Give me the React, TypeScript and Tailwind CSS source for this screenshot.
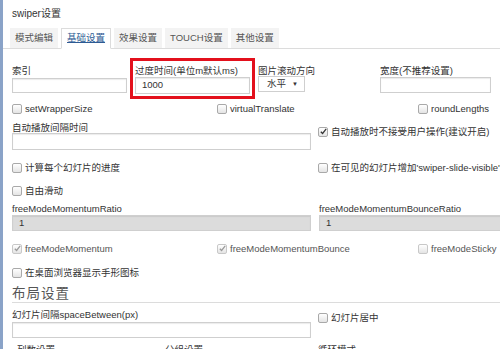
import React from "react";

const font = { fontFamily: '"Liberation Sans", "Noto Sans CJK SC", sans-serif' };

function Box({ checked = false, disabled = false }: { checked?: boolean; disabled?: boolean }) {
  return (
    <span
      className={`relative inline-block w-[10px] h-[10px] shrink-0 rounded-[2px] border ${
        disabled ? "border-[#c8c8c8]" : "border-[#a9a9a9]"
      } bg-gradient-to-b from-white to-[#e4e4e4]`}
    >
      {checked && (
        <svg viewBox="0 0 10 10" className="absolute left-[0px] top-[-1px] w-[9px] h-[9px]">
          <path
            d="M2 5.2 L4 7.2 L8 2.2"
            fill="none"
            stroke={disabled ? "#9a9a9a" : "#333"}
            strokeWidth="1.4"
          />
        </svg>
      )}
    </span>
  );
}

function Check({
  label,
  checked,
  disabled,
  className = "",
}: {
  label: string;
  checked?: boolean;
  disabled?: boolean;
  className?: string;
}) {
  return (
    <div className={`flex items-center gap-[3px] h-[12px] whitespace-nowrap ${className}`}>
      <Box checked={checked} disabled={disabled} />
      <span className={`text-[9.5px] leading-[12px] ${disabled ? "text-[#555]" : "text-[#333]"}`}>{label}</span>
    </div>
  );
}

function Input({ w, h = 16, value = "", disabled = false }: { w: number | string; h?: number; value?: string; disabled?: boolean }) {
  return (
    <div
      className={`border border-[#cfcfcf] shadow-[inset_0_1px_1px_rgba(0,0,0,0.08)] flex items-center pl-[6px] text-[9.5px] text-[#333] ${
        disabled ? "bg-[#dcdcdc]" : "bg-white"
      }`}
      style={{ width: w, height: h }}
    >
      {value}
    </div>
  );
}

export default function App() {
  return (
    <div
      className="w-[500px] h-[349px] overflow-hidden bg-white border-l-[3px] border-[#8aa3c8] text-[#333]"
      style={font}
    >
      <div className="w-[700px]">
        {/* title */}
        <div className="h-[26px] flex items-center pl-[9px] text-[10px] text-[#333]">swiper设置</div>

        {/* tabs */}
        <div className="mt-[3px] h-[20px] border-b border-[#dcdcdc] w-[497px] flex items-end pl-[7px] gap-[3px] text-[9.5px]">
          <div className="h-[20px] px-[5px] flex items-center bg-[#f3f3f3] text-[#555]">模式编辑</div>
          <div className="h-[21px] mb-[-1px] px-[5px] flex items-center bg-white border border-[#dcdcdc] border-b-white text-[#2d5b94] underline">
            基础设置
          </div>
          <div className="h-[20px] px-[5px] flex items-center bg-[#f3f3f3] text-[#555]">效果设置</div>
          <div className="h-[20px] px-[5px] flex items-center bg-[#f3f3f3] text-[#555]">TOUCH设置</div>
          <div className="h-[20px] px-[5px] flex items-center bg-[#f3f3f3] text-[#555]">其他设置</div>
        </div>

        <div className="pl-[9px] text-[9.5px]">
          {/* row 1 */}
          <div className="mt-[9px] flex items-start h-[41px]">
            <div className="w-[115px] mt-[7px]">
              <div className="h-[12px] leading-[12px]">索引</div>
              <div className="mt-[1px]">
                <Input w={115} h={15} />
              </div>
            </div>
            <div className="ml-[3px] w-[125px] h-[41px] border-[3px] border-[#e3101c] pl-[2px] pt-[4px]">
              <div className="h-[12px] leading-[12px] whitespace-nowrap">过度时间(单位m默认ms)</div>
              <Input w={115} h={17} value="1000" />
            </div>
            <div className="ml-[3px] w-[122px] mt-[7px]">
              <div className="h-[12px] leading-[12px] whitespace-nowrap">图片滚动方向</div>
              <div className="mt-[-1px] w-[47px] h-[16px] border border-[#cfcfcf] bg-white flex items-center pl-[8px] gap-[6px]">
                <span>水平</span>
                <span className="text-[6px]">▼</span>
              </div>
            </div>
            <div className="w-[111px] mt-[7px]">
              <div className="h-[12px] leading-[12px] whitespace-nowrap">宽度(不推荐设置)</div>
              <Input w={111} h={16} />
            </div>
          </div>

          {/* row 2 */}
          <div className="mt-[4px] flex">
            <Check label="setWrapperSize" className="w-[205px]" />
            <Check label="virtualTranslate" className="w-[201px]" />
            <Check label="roundLengths" />
          </div>

          {/* row 3 */}
          <div className="mt-[8px] flex">
            <div className="w-[306px]">
              <div className="h-[10px] leading-[10px]">自动播放间隔时间</div>
              <Input w={299} h={17} />
            </div>
            <Check label="自动播放时不接受用户操作(建议开启)" checked className="mt-[3px]" />
          </div>

          {/* row 4 */}
          <div className="mt-[12px] flex">
            <Check label="计算每个幻灯片的进度" className="w-[306px]" />
            <Check label="在可见的幻灯片增加'swiper-slide-visible'类" />
          </div>

          {/* row 5 */}
          <div className="mt-[11px] flex">
            <Check label="自由滑动" />
          </div>

          {/* row 6 */}
          <div className="mt-[7px] flex">
            <div className="w-[307px]">
              <div className="h-[10px] leading-[10px]">freeModeMomentumRatio</div>
              <div className="mt-[1px]">
                <Input w={299} h={16} value="1" disabled />
              </div>
            </div>
            <div className="w-[300px]">
              <div className="h-[10px] leading-[10px]">freeModeMomentumBounceRatio</div>
              <div className="mt-[1px]">
                <Input w={299} h={16} value="1" disabled />
              </div>
            </div>
          </div>

          {/* row 7 */}
          <div className="mt-[12px] flex">
            <Check label="freeModeMomentum" checked disabled className="w-[205px]" />
            <Check label="freeModeMomentumBounce" checked disabled className="w-[201px]" />
            <Check label="freeModeSticky" disabled />
          </div>

          {/* row 8 */}
          <div className="mt-[12px] flex">
            <Check label="在桌面浏览器显示手形图标" />
          </div>

          {/* heading */}
          <div className="mt-[6px] h-[18px] border-b border-[#dcdcdc] w-[488px] text-[13.5px] leading-[17px] text-[#555] tracking-[1px]">
            布局设置
          </div>

          {/* row 9 */}
          <div className="mt-[7px] flex">
            <div className="w-[306px]">
              <div className="h-[10px] leading-[10px] whitespace-nowrap">幻灯片间隔spaceBetween(px)</div>
              <div className="mt-[2px]">
                <Input w={299} h={16} />
              </div>
            </div>
            <Check label="幻灯片居中" className="mt-[2px]" />
          </div>

          {/* row 10 (cut) */}
          <div className="mt-[6px] flex h-[12px] leading-[12px]">
            <div className="w-[153px] pl-[5px]">列数设置</div>
            <div className="w-[153px]">分组设置</div>
            <div>循环模式</div>
          </div>
        </div>
      </div>
    </div>
  );
}
